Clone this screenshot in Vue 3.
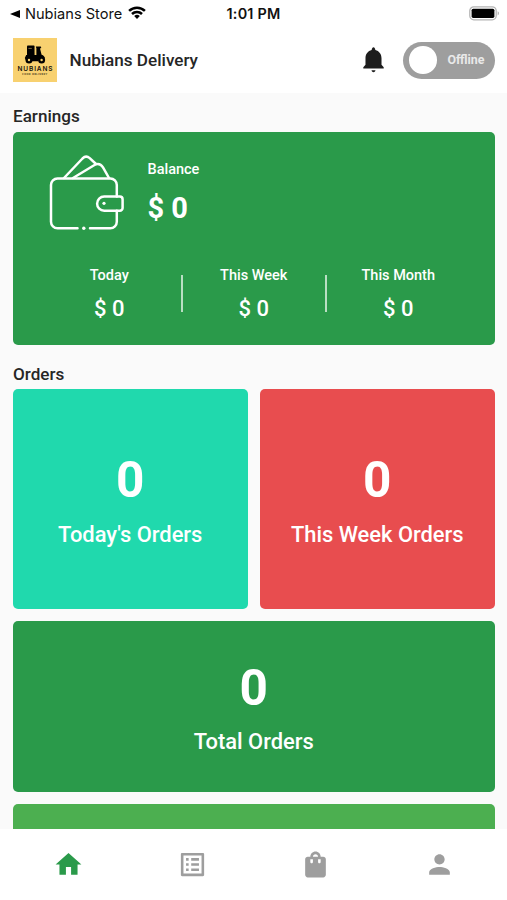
<script setup>
import { ref } from 'vue'

const online = ref(false)
const active = ref('home')

const earnings = [
  { label: 'Today', value: '$ 0' },
  { label: 'This Week', value: '$ 0' },
  { label: 'This Month', value: '$ 0' },
]

const orders = [
  { label: "Today's Orders", value: 0, tone: 'teal' },
  { label: 'This Week Orders', value: 0, tone: 'red' },
  { label: 'Total Orders', value: 0, tone: 'green' },
]

const tabs = [
  { id: 'home', path: 'M10 20v-6h4v6h5v-8h3L12 3 2 12h3v8z' },
  { id: 'list', path: 'M19 5v14H5V5h14m1.1-2H3.9c-.5 0-.9.4-.9.9v16.2c0 .4.4.9.9.9h16.2c.4 0 .9-.5.9-.9V3.900c0-.5-.5-.9-.9-.9zM11 7h6v2h-6V7zm0 4h6v2h-6v-2zm0 4h6v2h-6zM7 7h2v2H7zm0 4h2v2H7zm0 4h2v2H7z' },
  { id: 'bag', path: 'M18 6h-2c0-2.21-1.79-4-4-4S8 3.79 8 6H6c-1.1 0-2 .9-2 2v12c0 1.1.9 2 2 2h12c1.1 0 2-.9 2-2V8c0-1.1-.9-2-2-2zm-8 4c0 .55-.45 1-1 1s-1-.45-1-1V8h2v2zm2-6c1.1 0 2 .9 2 2h-4c0-1.1.9-2 2-2zm4 6c0 .55-.45 1-1 1s-1-.45-1-1V8h2v2z' },
  { id: 'profile', path: 'M12 12c2.21 0 4-1.79 4-4s-1.79-4-4-4-4 1.79-4 4 1.79 4 4 4zm0 2c-2.67 0-8 1.34-8 4v2h16v-2c0-2.66-5.33-4-8-4z' },
]
</script>

<template>
  <div class="screen">
    <div class="status">
      <div class="back">
        <svg class="arrow" viewBox="0 0 10 8"><path d="M10 0v8L0 4z" /></svg>
        <span>Nubians Store</span>
        <svg class="wifi" viewBox="0 0 18 13">
          <path d="M1.1 4.900a11.300 11.300 0 0 1 15.800 0M4 8a7.100 7.100 0 0 1 10 0" fill="none" stroke="#000" stroke-width="2.500" />
          <path d="M9 13L6.200 10.100a4 4 0 0 1 5.600 0z" />
        </svg>
      </div>
      <span class="time">1:01 PM</span>
      <svg class="battery" viewBox="0 0 31 15">
        <rect x="0.8" y="0.8" width="26.400" height="13" rx="4" fill="#fff" stroke="#b4b4b4" stroke-width="1.300" />
        <rect x="2.600" y="2.700" width="22.800" height="9.200" rx="1.600" />
        <path d="M28.700 5.200c1.600.6 1.600 3.600 0 4.200z" fill="#a8a8a8" />
      </svg>
    </div>

    <header class="header">
      <div class="logo">
        <svg class="scooter" viewBox="0 0 24 19">
          <rect x="4" y="0.6" width="7.600" height="9.600" rx="0.8" />
          <path d="M3.200 10h10.200V3.200L12.800 1.400h5l.5 1.600-1.300.6 1.600 6.200c2 .6 3.200 2 3.400 3.800h-5.200l-1.600 2.600H3.400L1.800 13z" />
          <circle cx="6" cy="15" r="3.500" />
          <circle cx="18.600" cy="15" r="3.500" />
          <circle cx="6" cy="15" r="1.200" fill="#f8d170" />
          <circle cx="18.600" cy="15" r="1.200" fill="#f8d170" />
          <path d="M12.400 1.500v7.200" stroke="#f8d170" stroke-width="1" />
          <path d="M5.400 3.400h3.400" stroke="#f8d170" stroke-width="0.500" />
        </svg>
        <span class="brand">NUBIANS</span>
        <span class="tagline">FOOD DELIVERY</span>
      </div>
      <h1 class="title">Nubians Delivery</h1>
      <svg class="bell" viewBox="0 0 24 24"><path d="M12 21.800c.9 0 1.500-.7 1.500-1.500h-3c0 .8.600 1.500 1.500 1.500zM18.200 16v-5c0-3.070-1.840-5.640-4.800-6.320C13.400 3.600 12.800 2.500 12 2.500s-1.400 1.100-1.400 2.180C7.630 5.360 5.800 7.920 5.800 11v5L4.100 18v1h15.800v-1z" /></svg>
      <button class="toggle" :class="{ on: online }" @click="online = !online">
        <span class="knob"></span>
        <span class="state">{{ online ? 'Online' : 'Offline' }}</span>
      </button>
    </header>

    <main class="content">
      <h2 class="heading">Earnings</h2>
      <section class="earnings">
        <div class="balance">
          <svg class="wallet" viewBox="48 154 78 78" fill="none" stroke="#fff" stroke-width="2.500" stroke-linecap="round" stroke-linejoin="round">
            <path d="M77.500 228.300H57.500a6.500 6.500 0 0 1-6.500-6.500V185a6.500 6.500 0 0 1 6.500-6.500h52.800a6.500 6.500 0 0 1 6.500 6.500v11.600M116.800 210.800v11a6.500 6.500 0 0 1-6.500 6.500H90" />
            <path d="M119.800 196.600h-15.600a7.100 7.100 0 0 0 0 14.200h15.600a2.800 2.800 0 0 0 2.800-2.800v-8.600a2.800 2.800 0 0 0-2.800-2.800z" />
            <path d="M64 178L82.500 158.500q3.500-3.500 7.200-.4l6.300 5.900M73 178L94.500 165q5.200-2.800 8.500 2.400l6 10.600" />
            <circle cx="104" cy="203.300" r="1.600" fill="#fff" stroke="none" />
            <circle cx="83.800" cy="228.300" r="1.700" fill="#fff" stroke="none" />
          </svg>
          <div class="balance-text">
            <span class="label">Balance</span>
            <strong class="amount">$ 0</strong>
          </div>
        </div>
        <div class="periods">
          <div v-for="e in earnings" :key="e.label" class="period">
            <span class="label">{{ e.label }}</span>
            <span class="sum">{{ e.value }}</span>
          </div>
        </div>
      </section>

      <h2 class="heading second">Orders</h2>
      <section class="orders">
        <article v-for="o in orders" :key="o.label" class="card" :class="o.tone">
          <strong class="count">{{ o.value }}</strong>
          <span class="caption">{{ o.label }}</span>
        </article>
        <article class="card light"></article>
      </section>
    </main>

    <nav class="tabs">
      <button v-for="t in tabs" :key="t.id" class="tab" :class="{ active: active === t.id }" @click="active = t.id">
        <svg viewBox="0 0 24 24"><path :d="t.path" /></svg>
      </button>
    </nav>
  </div>
</template>

<style>
body {
  margin: 0;
  background: #fff;
}
</style>

<style scoped>
.screen {
  width: 507px;
  height: 900px;
  display: flex;
  flex-direction: column;
  overflow: hidden;
  background: #fff;
  color: #262626;
  font-family: Roboto, sans-serif;
}
.screen * {
  box-sizing: border-box;
}
button {
  border: 0;
  padding: 0;
  background: none;
  font: inherit;
}
.status {
  flex: none;
  height: 27px;
  padding: 0 7px 0 10px;
  display: grid;
  grid-template-columns: 1fr auto 1fr;
  align-items: center;
  font-family: Inter, sans-serif;
  color: #111;
}
.back {
  display: flex;
  align-items: center;
  font-size: 14.600px;
  white-space: nowrap;
}
.arrow {
  width: 10px;
  height: 8px;
  margin-right: 5px;
}
.wifi {
  width: 18px;
  height: 13px;
  margin: -2px 0 0 6px;
}
.time {
  margin-right: 3px;
  font-size: 14.400px;
  font-weight: 600;
  letter-spacing: 0.2px;
}
.battery {
  width: 31px;
  height: 15px;
  justify-self: end;
}
.header {
  flex: none;
  height: 66px;
  padding: 0 12.500px 0 13px;
  display: flex;
  align-items: center;
}
.logo {
  width: 44px;
  height: 44px;
  display: flex;
  flex-direction: column;
  align-items: center;
  background: #f8d170;
  color: #17130a;
}
.scooter {
  width: 24px;
  height: 19px;
  margin-top: 7px;
}
.brand {
  margin-top: 2px;
  font: 600 6.500px/7px Inter, sans-serif;
  letter-spacing: 0.9px;
  margin-right: -0.9px;
}
.tagline {
  margin-top: 0;
  font: 600 2.400px/3px Inter, sans-serif;
  letter-spacing: 0.5px;
}
.title {
  flex: 1;
  margin: 0 0 0 12.500px;
  font-size: 17.100px;
  font-weight: 500;
}
.bell {
  width: 31px;
  height: 31px;
  margin: -1px 14px 0 0;
  fill: #1d1d1d;
}
.toggle {
  width: 92px;
  height: 37px;
  padding: 0 10px 0 6.500px;
  display: flex;
  align-items: center;
  justify-content: space-between;
  border-radius: 19px;
  background: #9e9e9e;
}
.toggle.on {
  background: #2a9a4a;
}
.knob {
  width: 27.500px;
  height: 27.500px;
  border-radius: 50%;
  background: #fff;
}
.state {
  margin-top: -1px;
  color: #e9e9e9;
  font-size: 12.400px;
  font-weight: 700;
}
.content {
  flex: 1;
  min-height: 0;
  padding: 12px 12.500px 0 13px;
  overflow: hidden;
  background: #fafafa;
}
.heading {
  margin: 0 0 4.500px;
  font-size: 17.100px;
  line-height: 22px;
  font-weight: 500;
}
.heading.second {
  margin-top: 17.500px;
}
.earnings {
  height: 213.800px;
  border-radius: 5px;
  background: #2a9a4a;
  color: #fff;
}
.balance {
  height: 123px;
  padding: 22.500px 0 0 34.500px;
  display: flex;
  gap: 22px;
}
.wallet {
  width: 78px;
  height: 78px;
}
.balance-text {
  display: flex;
  flex-direction: column;
  padding-top: 6px;
}
.label {
  font-size: 14.500px;
  line-height: 20px;
  font-weight: 500;
}
.amount {
  margin-top: 9.500px;
  font-size: 29px;
  line-height: 36px;
  font-weight: 700;
}
.periods {
  height: 76px;
  padding: 0 24px;
  display: grid;
  grid-template-columns: repeat(3, 1fr);
}
.period {
  position: relative;
  padding-top: 11px;
  display: flex;
  flex-direction: column;
  align-items: center;
}
.period + .period::before {
  content: '';
  position: absolute;
  left: -1px;
  top: 20px;
  width: 2px;
  height: 37px;
  background: #b9dfc3;
}
.sum {
  margin-top: 9.500px;
  font-size: 22px;
  line-height: 28px;
  font-weight: 500;
}
.orders {
  display: grid;
  grid-template-columns: 1fr 1fr;
  grid-template-rows: 219.500px 170.500px 170px;
  gap: 12.500px;
}
.card {
  display: flex;
  flex-direction: column;
  align-items: center;
  justify-content: center;
  border-radius: 5px;
  color: #fff;
}
.teal {
  background: #20d9ad;
}
.red {
  background: #e84d4f;
}
.green {
  grid-column: 1 / -1;
  background: #2a9a4a;
}
.light {
  grid-column: 1 / -1;
  background: #4caf50;
}
.count {
  margin-top: 1.500px;
  font-size: 49.500px;
  line-height: 58px;
  font-weight: 700;
}
.caption {
  margin-top: 11.500px;
  font-size: 21.900px;
  line-height: 28px;
  font-weight: 500;
}
.tabs {
  flex: none;
  height: 71px;
  padding: 0 6px 0 7px;
  display: grid;
  grid-template-columns: repeat(4, 1fr);
  align-items: center;
  background: #fff;
}
.tab {
  height: 71px;
  display: flex;
  align-items: center;
  justify-content: center;
}
.tab svg {
  width: 31px;
  height: 31px;
  fill: #9e9e9e;
}
.tab.active svg {
  fill: #2a9a4a;
}
</style>
